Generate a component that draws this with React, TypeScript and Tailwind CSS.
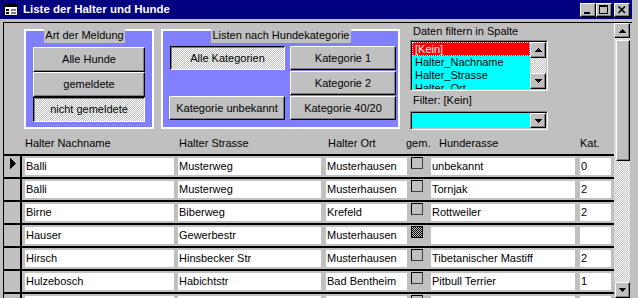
import React from "react";

type Row = {
  name: string;
  street: string;
  city: string;
  gem: boolean | null;
  breed: string;
  kat: string;
};

const rows: Row[] = [
  { name: "Balli", street: "Musterweg", city: "Musterhausen", gem: false, breed: "unbekannt", kat: "0" },
  { name: "Balli", street: "Musterweg", city: "Musterhausen", gem: false, breed: "Tornjak", kat: "2" },
  { name: "Birne", street: "Biberweg", city: "Krefeld", gem: false, breed: "Rottweiler", kat: "2" },
  { name: "Hauser", street: "Gewerbestr", city: "Musterhausen", gem: null, breed: "", kat: "" },
  { name: "Hirsch", street: "Hinsbecker Str", city: "Musterhausen", gem: false, breed: "Tibetanischer Mastiff", kat: "2" },
  { name: "Hulzebosch", street: "Habichtstr", city: "Bad Bentheim", gem: false, breed: "Pitbull Terrier", kat: "1" },
  { name: "", street: "", city: "", gem: false, breed: "", kat: "" },
];

// win95 style bevels
const raised =
  "bg-[#c0c0c0] border border-t-white border-l-white border-r-black border-b-black shadow-[inset_-1px_-1px_0_#808080]";
const pressed =
  "border border-t-black border-l-black border-r-white border-b-white shadow-[inset_1px_1px_0_#808080] bg-[image:repeating-conic-gradient(#c0c0c0_0_25%,#ffffff_0_50%)] bg-[length:2px_2px]";
const dither =
  "bg-[image:repeating-conic-gradient(#c0c0c0_0_25%,#ffffff_0_50%)] bg-[length:2px_2px]";
const sunken =
  "border border-t-[#808080] border-l-[#808080] border-r-white border-b-white shadow-[inset_1px_1px_0_#000]";

function Arrow({ dir }: { dir: "up" | "down" }) {
  return (
    <svg width="7" height="4" viewBox="0 0 7 4" shapeRendering="crispEdges">
      {dir === "up" ? (
        <polygon points="3.5,0 7,4 0,4" fill="black" />
      ) : (
        <polygon points="0,0 7,0 3.5,4" fill="black" />
      )}
    </svg>
  );
}

function Btn({ label, on, className = "" }: { label: string; on?: boolean; className?: string }) {
  return (
    <div className={`flex items-center justify-center whitespace-nowrap ${on ? pressed : raised} ${className}`}>
      {label}
    </div>
  );
}

function FormIcon() {
  return (
    <svg width="14" height="12" viewBox="0 0 14 12" shapeRendering="crispEdges">
      <rect x="0.5" y="0.5" width="13" height="11" fill="white" stroke="black" />
      <rect x="1" y="1" width="12" height="2" fill="black" />
      <rect x="2" y="5" width="3" height="2" fill="black" />
      <rect x="7" y="5" width="5" height="2" fill="#808080" />
      <rect x="2" y="8" width="3" height="2" fill="black" />
      <rect x="7" y="8" width="5" height="2" fill="#808080" />
    </svg>
  );
}

function TitleButtons() {
  return (
    <div className="ml-auto flex items-center">
      <div className={`${raised} w-[16px] h-[14px]`}>
        <svg width="14" height="12" viewBox="0 0 14 12" shapeRendering="crispEdges">
          <rect x="3" y="8" width="6" height="2" fill="black" />
        </svg>
      </div>
      <div className={`${raised} w-[16px] h-[14px]`}>
        <svg width="14" height="12" viewBox="0 0 14 12" shapeRendering="crispEdges">
          <rect x="2.5" y="1.5" width="8" height="8" fill="none" stroke="black" />
          <rect x="2" y="1" width="9" height="2" fill="black" />
        </svg>
      </div>
      <div className={`${raised} w-[16px] h-[14px] ml-[2px]`}>
        <svg width="14" height="12" viewBox="0 0 14 12">
          <path d="M3.5 2.5 L10 9 M10 2.5 L3.5 9" stroke="black" strokeWidth="1.6" />
        </svg>
      </div>
    </div>
  );
}

function CheckBox({ value }: { value: boolean | null }) {
  if (value === null) {
    return (
      <div className="mt-[1px] w-[12px] h-[12px] shrink-0 border border-black bg-[image:repeating-conic-gradient(#000000_0_25%,#c0c0c0_0_50%)] bg-[length:2px_2px]" />
    );
  }
  return <div className="mt-[1px] w-[12px] h-[12px] shrink-0 border border-black border-r-[#404040] border-b-[#404040]" />;
}

function Field({ w, text }: { w: string; text: string }) {
  return (
    <div className={`${w} shrink-0 mt-[2px] h-[17px] bg-white pl-[1px] leading-[17px] overflow-hidden whitespace-nowrap`}>
      {text}
    </div>
  );
}

export default function App() {
  return (
    <div className="w-[638px] h-[298px] overflow-hidden bg-[#c0c0c0] text-[11px] text-black font-['Liberation_Sans',Arial,sans-serif]">
      {/* Title bar */}
      <div className="flex h-[19px] w-[632px] items-center bg-[#000080] pl-[4px] pr-[2px]">
        <FormIcon />
        <span className="ml-[5px] text-[11.5px] font-bold text-white">Liste der Halter und Hunde</span>
        <TitleButtons />
      </div>

      {/* Form frame */}
      <div className="mt-[3px] ml-[3px] flex h-[276px] w-[629px] border-t border-l border-black overflow-hidden">
        <div className="w-[610px] flex flex-col overflow-hidden">
          {/* Top section */}
          <div className="flex h-[107px] shrink-0">
            {/* Art der Meldung */}
            <div className="relative mt-[6px] ml-[20px] h-[100px] w-[130px] border-2 border-white bg-[#8080ff] pt-[16px] pl-[7px]">
              <div className="absolute left-[18px] top-[-3px] flex h-[15px] w-[81px] items-center justify-center bg-[#c0c0c0]">
                Art der Meldung
              </div>
              <div className="flex w-[112px] flex-col">
                <Btn label="Alle Hunde" className="h-[25px]" />
                <Btn label="gemeldete" className="h-[25px]" />
                <Btn label="nicht gemeldete" on className="h-[25px]" />
              </div>
            </div>

            {/* Listen nach Hundekategorie */}
            <div className="relative mt-[6px] ml-[7px] h-[100px] w-[239px] border-2 border-white bg-[#8080ff] pt-[15px] pl-[6px]">
              <div className="absolute left-[48px] top-[-3px] flex h-[15px] w-[140px] items-center justify-center bg-[#c0c0c0]">
                Listen nach Hundekategorie
              </div>
              <div className="grid grid-cols-[116px_106px] grid-rows-[24px_24px_24px] gap-x-[5px] gap-y-[1px]">
                <Btn label="Alle Kategorien" on className="ml-[1px]" />
                <Btn label="Kategorie 1" />
                <div />
                <Btn label="Kategorie 2" />
                <Btn label="Kategorie unbekannt" />
                <Btn label="Kategorie 40/20" />
              </div>
            </div>

            {/* Filter column */}
            <div className="mt-[2px] ml-[10px] flex w-[138px] flex-col">
              <div className="h-[15px] pl-[3px] leading-[13px]">Daten filtern in Spalte</div>
              <div className={`${sunken} flex h-[51px] shrink-0 p-[1px]`}>
                <div className="flex-1 overflow-hidden bg-[#00ffff]">
                  <div className="h-[14px] border border-dotted border-white bg-[#ff0000] pl-[2px] leading-[12px] text-white">
                    [Kein]
                  </div>
                  <div className="h-[13px] pl-[3px] leading-[13px]">Halter_Nachname</div>
                  <div className="h-[13px] pl-[3px] leading-[13px]">Halter_Strasse</div>
                  <div className="h-[13px] pl-[3px] leading-[13px]">Halter_Ort</div>
                </div>
                <div className="flex w-[16px] flex-col">
                  <div className={`${raised} flex h-[16px] items-center justify-center`}>
                    <Arrow dir="up" />
                  </div>
                  <div className={`flex-1 ${dither}`} />
                  <div className={`${raised} flex h-[16px] items-center justify-center`}>
                    <Arrow dir="down" />
                  </div>
                </div>
              </div>
              <div className="mt-[3px] h-[17px] shrink-0 pl-[3px] leading-[13px]">Filter: [Kein]</div>
              <div className={`${sunken} flex h-[19px] shrink-0 p-[1px]`}>
                <div className="flex-1 bg-[#00ffff]" />
                <div className={`${raised} flex w-[16px] items-center justify-center`}>
                  <Arrow dir="down" />
                </div>
              </div>
            </div>
          </div>

          {/* Column headers */}
          <div className="flex h-[24px] shrink-0 items-end pb-[4px] pl-[21px] leading-[13px] whitespace-nowrap">
            <div className="w-[154px]">Halter Nachname</div>
            <div className="w-[149px]">Halter Strasse</div>
            <div className="w-[78px]">Halter Ort</div>
            <div className="w-[33px]">gem.</div>
            <div className="w-[141px]">Hunderasse</div>
            <div>Kat.</div>
          </div>

          {/* Records */}
          {rows.map((row, index) => (
            <div key={index} className="flex h-[23px] shrink-0 border-t-2 border-black">
              <div className="h-full w-[18px] shrink-0 border-r-2 border-black pt-[2px] pl-[6px]">
                {index === 0 && (
                  <svg width="7" height="11" viewBox="0 0 7 11" shapeRendering="crispEdges">
                    <polygon points="0,0 6.5,5.5 0,11" fill="black" />
                  </svg>
                )}
              </div>
              <div className="ml-[3px] flex">
                <Field w="w-[149px]" text={row.name} />
                <div className="w-[4px] shrink-0" />
                <Field w="w-[143px]" text={row.street} />
                <div className="w-[5px] shrink-0" />
                <Field w="w-[81px]" text={row.city} />
                <div className="w-[4px] shrink-0" />
                <CheckBox value={row.gem} />
                <div className="w-[8px] shrink-0" />
                <Field w="w-[144px]" text={row.breed} />
                <div className="w-[5px] shrink-0" />
                <Field w="w-[31px]" text={row.kat} />
              </div>
            </div>
          ))}
        </div>

        {/* Vertical scrollbar */}
        <div className="flex w-[16px] flex-col">
          <div className={`${raised} flex h-[15px] shrink-0 items-center justify-center`}>
            <Arrow dir="up" />
          </div>
          <div className={`flex flex-1 flex-col ${dither}`}>
            <div className={`${raised} mt-[2px] ml-[2px] h-[121px]`} />
          </div>
          <div className={`${raised} ml-[1px] flex h-[16px] shrink-0 items-center justify-center`}>
            <Arrow dir="down" />
          </div>
        </div>
      </div>
    </div>
  );
}
